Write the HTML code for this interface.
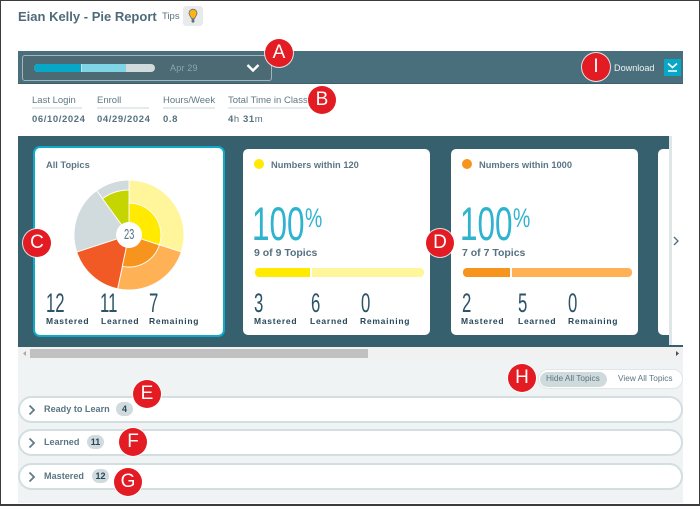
<!DOCTYPE html>
<html><head><meta charset="utf-8"><style>
html,body{margin:0;padding:0;background:#fff}
#p{position:relative;width:700px;height:506px;overflow:hidden;background:#fff;font-family:"Liberation Sans",sans-serif;color:#56717f}
#p div,#p svg{position:absolute}
.t{white-space:nowrap}
.f{position:absolute;background:#3c3c3c}
.card{background:#fff;border-radius:5px}
.n{white-space:nowrap;font-size:27px;line-height:27px;top:290px;color:#2c5367;transform:scaleX(.62);transform-origin:0 0}
.l{white-space:nowrap;font-size:8.5px;line-height:10px;top:316px;font-weight:bold;color:#27485a;letter-spacing:.75px}
.h{white-space:nowrap;font-size:9.3px;line-height:14px;top:158px;font-weight:bold;color:#5a7683}
.big{white-space:nowrap;font-size:47px;line-height:47px;top:200px;color:#2fb3cf;transform:scaleX(.67);transform-origin:0 0}
.pc{white-space:nowrap;font-size:27px;line-height:27px;top:205px;color:#2fb3cf;transform:scaleX(.72);transform-origin:0 0}
.s{white-space:nowrap;font-size:10.5px;line-height:14px;top:246px;font-weight:bold;color:#56717f}
.b{height:9px;top:268px}
.r{left:18px;width:661px;height:23px;border:2px solid #d3dee0;border-radius:14px;background:#fff}
.rt{white-space:nowrap;font-size:9.1px;font-weight:bold;line-height:12px;color:#5a7683;left:44px}
.pb{background:#d1dbde;border-radius:8px;height:14px;width:17px;text-align:center;font-size:9px;font-weight:bold;line-height:14px;color:#27485a}
.m{width:28px;height:28px;border-radius:50%;background:#e31b23;color:#fff;text-align:center;font-size:19px;line-height:28px;box-shadow:0 0 0 1px rgba(255,255,255,.8)}
.lb{white-space:nowrap;font-size:9.5px;line-height:12px;top:95px;color:#5f7986}
.ul{height:2px;top:107px;background:#e5ebec}
.v{white-space:nowrap;font-size:9.5px;line-height:12px;top:114px;font-weight:bold;color:#56717f;letter-spacing:.6px}
</style></head><body><div id="p">

<div class="t" style="left:18px;top:8px;font-size:13px;line-height:18px;font-weight:bold;color:#4f6b7a">Eian Kelly - Pie Report</div>
<div class="t" style="left:162px;top:11px;font-size:9.5px;line-height:12px;color:#56717f">Tips</div>
<div style="left:183px;top:6px;width:20px;height:20px;background:#e8ebeb;border-radius:3px"></div>
<svg style="left:183px;top:6px" width="20" height="20" viewBox="0 0 20 20"><path d="M10 3.2a4 4 0 0 1 4 4c0 2-1.6 2.8-2.4 5.3h-3.2C7.600 10 6 9.200 6 7.200a4 4 0 0 1 4-4z" fill="#fdb515" stroke="#667" stroke-width=".8"/><rect x="8.600" y="13" width="2.800" height="3.600" rx=".8" fill="#5d7480"/></svg>

<div style="left:18px;top:51px;width:665px;height:33px;background:#4a6f7c;box-shadow:inset 0 -1px 0 #3d616e"></div>
<div style="left:22px;top:55px;width:248px;height:24px;border:1px solid #a3b5bb;border-radius:3px;background:#4b6a74"></div>
<div style="left:34px;top:64px;width:121px;height:8px;border-radius:4px;background:#d1dadd;overflow:hidden">
 <div style="left:0;top:0;width:47px;height:8px;background:#06a7c7"></div>
 <div style="left:48px;top:0;width:44px;height:8px;background:#7fd5e5"></div>
</div>
<div class="t" style="left:170px;top:62px;font-size:9px;line-height:12px;color:#8fa4ab;letter-spacing:.2px">Apr 29</div>
<svg style="left:245px;top:62px" width="16" height="12" viewBox="0 0 16 12"><path d="M2.500 3L8 8.500 13.500 3" fill="none" stroke="#fff" stroke-width="2.400"/></svg>
<div class="t" style="left:614px;top:62px;font-size:9.100px;line-height:13px;color:#eef3f4">Download</div>
<div style="left:664px;top:59px;width:17px;height:17px;background:#06a7c7"></div>
<svg style="left:664px;top:59px" width="17" height="17" viewBox="0 0 17 17"><path d="M4 4.500L8.500 8.500 13 4.500M4 12h9" fill="none" stroke="#fff" stroke-width="1.600"/></svg>

<div class="lb" style="left:32px">Last Login</div><div class="ul" style="left:32px;width:50px"></div>
<div class="lb" style="left:97px">Enroll</div><div class="ul" style="left:97px;width:52px"></div>
<div class="lb" style="left:163px">Hours/Week</div><div class="ul" style="left:163px;width:52px"></div>
<div class="lb" style="left:228px">Total Time in Class</div><div class="ul" style="left:228px;width:80px"></div>
<div class="v" style="left:32px">06/10/2024</div>
<div class="v" style="left:97px">04/29/2024</div>
<div class="v" style="left:163px">0.8</div>
<div class="v" style="left:228px">4<span style="font-weight:normal">h</span> 31<span style="font-weight:normal">m</span></div>

<div style="left:18px;top:136px;width:651px;height:211px;background:#37606f"></div>
<div style="left:669px;top:136px;width:3px;height:211px;background:#dfe6e8"></div>
<div style="left:669px;top:345px;width:14px;height:2px;background:#37606f"></div>

<div class="card" style="left:33px;top:146px;width:188px;height:187px;border:2px solid #0fa9c9;border-radius:7px"></div>
<div class="h" style="left:46px">All Topics</div>
<svg style="left:69px;top:175px" width="120" height="120" viewBox="69 175 120 120">
<g stroke="#fff" stroke-width=".9">
<path d="M129 235L129 180A55 55 0 0 1 181.300 252Z" fill="#fff59a"/>
<path d="M129 235L181.300 252A55 55 0 0 1 117.600 288.800Z" fill="#ffb156"/>
<path d="M129 235L117.600 288.800A55 55 0 0 1 76.700 252Z" fill="#f15a24"/>
<path d="M129 235L76.700 252A55 55 0 0 1 96.700 190.500Z" fill="#d1dadd"/>
<path d="M129 235L96.700 190.500A55 55 0 0 1 129 180Z" fill="#d1dadd"/>
<path d="M129 235L129 203A32 32 0 0 1 159.400 244.900Z" fill="#ffea00"/>
<path d="M129 235L159.400 244.900A32 32 0 0 1 122.300 266.300Z" fill="#f7941d"/>
<path d="M129 235L102.500 198.600A45 45 0 0 1 129 190Z" fill="#c5d500"/>
</g>
<circle cx="129" cy="235" r="13" fill="#fff"/>
</svg>
<div class="t" style="left:124px;top:227px;font-size:15px;line-height:15px;color:#56717f;transform:scaleX(.62);transform-origin:0 0">23</div>
<div class="n" style="left:46px">12</div><div class="n" style="left:100px">11</div><div class="n" style="left:149px">7</div>
<div class="l" style="left:46px">Mastered</div><div class="l" style="left:101px">Learned</div><div class="l" style="left:149px">Remaining</div>

<div class="card" style="left:243px;top:149px;width:187px;height:186px"></div>
<div style="left:254px;top:159px;width:10px;height:10px;border-radius:50%;background:#ffea00"></div>
<div class="h" style="left:271px">Numbers within 120</div>
<div class="big" style="left:252px">100</div><div class="pc" style="left:305px">%</div>
<div class="s" style="left:254px">9 of 9 Topics</div>
<div class="b" style="left:255px;width:55px;background:#ffea00;border-radius:4px 0 0 4px"></div>
<div class="b" style="left:312px;width:112px;background:#fff59a;border-radius:0 4px 4px 0"></div>
<div class="n" style="left:254px">3</div><div class="n" style="left:311px">6</div><div class="n" style="left:361px">0</div>
<div class="l" style="left:254px">Mastered</div><div class="l" style="left:310px">Learned</div><div class="l" style="left:360px">Remaining</div>

<div class="card" style="left:451px;top:149px;width:187px;height:186px"></div>
<div style="left:462px;top:159px;width:10px;height:10px;border-radius:50%;background:#f7941d"></div>
<div class="h" style="left:479px">Numbers within 1000</div>
<div class="big" style="left:460px">100</div><div class="pc" style="left:513px">%</div>
<div class="s" style="left:462px">7 of 7 Topics</div>
<div class="b" style="left:463px;width:47px;background:#f7941d;border-radius:4px 0 0 4px"></div>
<div class="b" style="left:512px;width:120px;background:#ffb156;border-radius:0 4px 4px 0"></div>
<div class="n" style="left:462px">2</div><div class="n" style="left:518px">5</div><div class="n" style="left:568px">0</div>
<div class="l" style="left:461px">Mastered</div><div class="l" style="left:518px">Learned</div><div class="l" style="left:568px">Remaining</div>

<div class="card" style="left:658px;top:149px;width:11px;height:186px;border-radius:5px 0 0 5px"></div>
<svg style="left:671px;top:235px" width="10" height="12" viewBox="0 0 10 12"><path d="M3 2l4 4-4 4" fill="none" stroke="#4f6b7a" stroke-width="1.300"/></svg>

<div style="left:18px;top:347px;width:665px;height:156px;background:#eff3f3"></div>
<div style="left:18px;top:347px;width:665px;height:12px;background:#f1f1f1"></div>
<div style="left:30px;top:349px;width:338px;height:9px;background:#c1c1c1"></div>
<svg style="left:21px;top:349px" width="8" height="9" viewBox="0 0 8 9"><path d="M5 2v5L2 4.500z" fill="#a8a8a8"/></svg>
<svg style="left:673px;top:349px" width="8" height="9" viewBox="0 0 8 9"><path d="M3 2v5l3-2.500z" fill="#505050"/></svg>

<div style="left:538px;top:369px;width:143px;height:18px;border:1px solid #dfe7e8;border-radius:11px;background:#fff"></div>
<div style="left:540px;top:372px;width:67px;height:15px;border-radius:8px;background:#cfdadd"></div>
<div class="t" style="left:546px;top:372px;font-size:8.300px;line-height:13px;color:#5a7683">Hide All Topics</div>
<div class="t" style="left:618px;top:372px;font-size:8.300px;line-height:13px;color:#5a7683">View All Topics</div>

<div class="r" style="top:396px"></div>
<div class="r" style="top:429px"></div>
<div class="r" style="top:463px"></div>
<svg style="left:27px;top:403px" width="10" height="14" viewBox="0 0 10 14"><path d="M2.500 2.500L7 7l-4.500 4.500" fill="none" stroke="#5f7b88" stroke-width="1.800"/></svg>
<svg style="left:27px;top:436px" width="10" height="14" viewBox="0 0 10 14"><path d="M2.500 2.500L7 7l-4.500 4.500" fill="none" stroke="#5f7b88" stroke-width="1.800"/></svg>
<svg style="left:27px;top:470px" width="10" height="14" viewBox="0 0 10 14"><path d="M2.500 2.500L7 7l-4.500 4.500" fill="none" stroke="#5f7b88" stroke-width="1.800"/></svg>
<div class="rt" style="top:403px">Ready to Learn</div><div class="pb" style="left:116px;top:402px">4</div>
<div class="rt" style="top:436px">Learned</div><div class="pb" style="left:87px;top:435px">11</div>
<div class="rt" style="top:470px">Mastered</div><div class="pb" style="left:92px;top:469px">12</div>

<div class="m" style="left:265px;top:39px">A</div>
<div class="m" style="left:308px;top:86px">B</div>
<div class="m" style="left:582px;top:53px">I</div>
<div class="m" style="left:23px;top:229px">C</div>
<div class="m" style="left:426px;top:229px">D</div>
<div class="m" style="left:133px;top:380px">E</div>
<div class="m" style="left:119px;top:428px">F</div>
<div class="m" style="left:114px;top:468px">G</div>
<div class="m" style="left:508px;top:364px">H</div>

<div class="f" style="left:0;top:0;width:700px;height:1px"></div>
<div class="f" style="left:0;top:504px;width:700px;height:2px"></div>
<div class="f" style="left:0;top:0;width:1px;height:506px"></div>
<div class="f" style="left:699px;top:0;width:1px;height:506px"></div>
</div></body></html>
